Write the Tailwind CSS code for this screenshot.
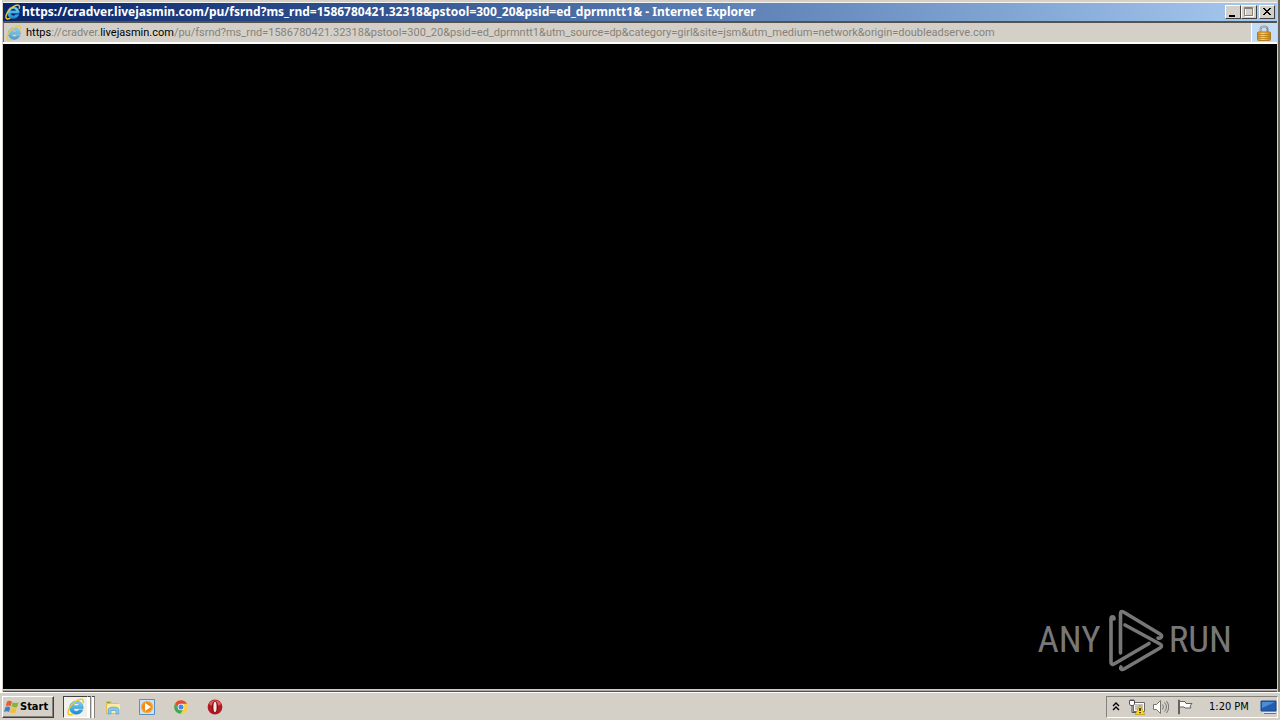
<!DOCTYPE html>
<html lang="en">
<head>
<meta charset="utf-8">
<title>Internet Explorer</title>
<script src="https://cdn.jsdelivr.net/npm/@tailwindcss/browser@4"></script>
</head>
<body class="flex h-screen flex-col overflow-hidden bg-[#d4d0c8] font-['Tahoma','DejaVu_Sans_Condensed','DejaVu_Sans',sans-serif] text-[11px] text-black">
<svg class="absolute size-0" aria-hidden="true">
  <defs>
    <linearGradient id="blue" x1="0" y1="0" x2="0" y2="1"><stop offset="0" stop-color="#7edcff"/><stop offset="1" stop-color="#168bd2"/></linearGradient>
    <linearGradient id="gold" x1="0" y1="0" x2="1" y2="0"><stop offset="0" stop-color="#d88f16"/><stop offset=".4" stop-color="#ffd45a"/><stop offset="1" stop-color="#c98212"/></linearGradient>
    <symbol id="ie" viewBox="0 0 16 16">
      <path d="M14.4 9.3H5.6c.4 2.7 3.8 3.4 5 1.2h3.5C12 16.5 2.3 15.6 2.3 8.7 2.3.8 14.8.4 14.4 9.3ZM5.7 6.8h5.2C10.5 4 6.2 4 5.7 6.8Z" fill="url(#blue)" stroke="#2587c5" stroke-width=".4"/>
      <path d="M14.2 4.7C15.6.3 11.9.2 8 2.8 3 6 .2 11.3 1.1 14c.5 1.5 2.8 1 4.3 0" fill="none" stroke="#efc530" stroke-width="1.4"/>
    </symbol>
  </defs>
</svg>

<main class="flex min-h-0 flex-1 flex-col border-l-2 border-r-2 border-l-white border-r-[#68655f] pt-[3px]">
  <header class="ml-px mr-px flex h-[18px] shrink-0 items-center bg-linear-to-r from-[#0a246a] to-[#a6caf0] pl-[2px] pr-[2px] shadow-[0_-1px_0_#f4f2ed]">
    <svg class="size-4 shrink-0" aria-hidden="true"><use href="#ie"/></svg>
    <h1 class="ml-px min-w-0 flex-1 truncate font-['Noto_Sans',sans-serif] text-[12px] font-bold leading-[18px] text-white">https://cradver.livejasmin.com/pu/fsrnd?ms_rnd=1586780421.32318&amp;pstool=300_20&amp;psid=ed_dprmntt1&amp; - Internet Explorer</h1>
    <div class="flex">
      <button aria-label="Minimize" class="flex h-[14px] w-4 items-center justify-center border border-b-[#404040] border-l-white border-r-[#404040] border-t-white bg-[#d4d0c8]"><svg class="h-3 w-[14px] shrink-0" viewBox="0 0 14 12"><path d="M3 9h6v2H3z"/></svg></button>
      <button aria-label="Maximize" disabled class="flex h-[14px] w-4 items-center justify-center border border-b-[#404040] border-l-white border-r-[#404040] border-t-white bg-[#d4d0c8]"><svg class="h-3 w-[14px] shrink-0" viewBox="0 0 14 12" fill="none"><path d="M3.5 2.5h8v8h-8z" stroke="#fff"/><path d="M2.5 1.5h8v8h-8zM2.5 2.5h8" stroke="#85827c"/></svg></button>
      <button aria-label="Close" class="ml-[2px] flex h-[14px] w-4 items-center justify-center border border-b-[#404040] border-l-white border-r-[#404040] border-t-white bg-[#d4d0c8]"><svg class="h-3 w-[14px] shrink-0" viewBox="0 0 14 12"><path d="m3 2 7 7m0-7-7 7M4 2l7 7m0-7-7 7" stroke="#000"/></svg></button>
    </div>
  </header>
  <div class="ml-px mr-px flex h-[23px] shrink-0 border-b-2 border-t-2 border-b-white border-t-[#55534f] bg-[#d4d0c8]">
    <div class="flex min-w-0 flex-1 items-center border-l border-l-[#77746e] pl-[2px] pt-px">
      <svg class="size-4 shrink-0 opacity-75" aria-hidden="true"><use href="#ie"/></svg>
      <p class="ml-1 truncate font-['Roboto',sans-serif] leading-[18px] text-[#85827c]"><span class="text-black">https</span>://cradver.<span class="text-black">livejasmin.com</span>/pu/fsrnd?ms_rnd=1586780421.32318&amp;pstool=300_20&amp;psid=ed_dprmntt1&amp;utm_source=dp&amp;category=girl&amp;site=jsm&amp;utm_medium=network&amp;origin=doubleadserve.com</p>
    </div>
    <button aria-label="Security report" class="flex w-[26px] items-center justify-center border-l border-l-white bg-[#c3dcf7] pr-px">
      <svg class="size-4" viewBox="0 0 16 16"><path d="M4.5 8V4.5C4.5.5 11.5.5 11.5 4.5V8" fill="none" stroke="#918b7d" stroke-width="2"/><path d="M4 7V4.5C4 1 10 1 11 3" fill="none" stroke="#e5e2d6" stroke-width=".7"/><rect x="1.5" y="7" width="13" height="8.5" rx="1" fill="url(#gold)" stroke="#b57917"/><path d="M2 9.5h12M2 11.5h12M2 13.5h12" stroke="#ad741b" stroke-width=".7"/></svg>
    </button>
  </div>
  <section class="ml-px mr-px flex min-h-0 flex-1 items-end justify-end bg-black pb-[17px] pr-[45px]">
    <div class="flex items-center font-['Roboto_Condensed','Liberation_Sans_Narrow',sans-serif] text-[37px] leading-[62px] text-[#777777]">
      <span>ANY</span>
      <svg class="mx-1 ml-[6px] h-[64px] w-[58px]" viewBox="0 0 58 64" fill="none" stroke="#777777" stroke-width="3.6" stroke-linecap="round" stroke-linejoin="round"><path d="M7 11C7 8 4 8 4 11v43c0 2 1 3 3 2l35-20.5"/><path d="M13.5 45V6c0-3 1-3 3-2L53 26c3 2 1 5-2 4"/><path d="M18 17l35 19c2 1 2 3 0 4L17 61c-2 1-4 0-3-2"/></svg>
      <span>RUN</span>
    </div>
  </section>
  <div class="ml-px mr-px h-[3px] shrink-0 border-b border-t border-b-[#55534f] border-t-[#d4d0c8] bg-[#aaa69f]"></div>
</main>

<footer class="flex h-[28px] shrink-0 items-center border-t border-t-white pl-[2px] pr-[2px]">
  <button class="flex h-[22px] w-[52px] items-center border border-b-[#404040] border-l-white border-r-[#404040] border-t-white pl-px pt-px font-bold shadow-[inset_-1px_-1px_0_#85827c]">
    <svg class="size-4 shrink-0" viewBox="0 0 16 16"><path d="M3 2.5c2-1 3.4-.8 5 .2L6.6 7.2c-1.7-1-3-1-4.9 0Z" fill="#f05a25"/><path d="M8.8 3.2c2 1 3.6.8 5.8 0l-1.4 4.7c-2 .8-3.7.6-5.7-.3Z" fill="#81b83b"/><path d="M1.4 8.2c1.8-1 3.3-.8 5 .2L5 13c-2-1.2-3.2-1-5 0Z" fill="#3d80c4"/><path d="M7.2 8.8c1.8 1 3.5.9 5.7.2l-1.5 4.6c-2 .8-3.8.6-5.6-.3Z" fill="#f6bd2e"/></svg>
    <span>Start</span>
  </button>
  <nav aria-label="Taskbar" class="flex h-full flex-1 items-center pl-[9px]">
    <button aria-label="Internet Explorer" class="flex h-[22px] w-[25px] items-center justify-center border border-b-white border-l-[#404040] border-r-white border-t-[#404040] bg-[#f2f0eb]"><svg class="size-[18px]"><use href="#ie"/></svg></button>
    <span class="flex h-[22px] w-[7px] gap-px"><i class="w-[3px] border-r border-t border-r-[#85827c] border-t-[#404040] bg-white"></i><i class="w-[3px] border-r border-t border-r-[#85827c] border-t-[#404040] bg-white"></i></span>
    <button aria-label="File Explorer" class="ml-[9px] flex size-[18px] items-center justify-center"><svg class="size-4" viewBox="0 0 16 16"><path d="M1 2h5l1 2h7v11H1Z" fill="#e8bd51"/><path d="M2 3h3v1H2z" fill="#58a953"/><path d="M3 5h12v9H2V6Z" fill="#ffeaa1"/><path d="M3 15v-4c0-2 2-3 5.5-3s5.5 1 5.5 3v4h-3v-3.5H6V15Z" fill="#83c9ed" stroke="#539bc4" stroke-width=".6"/></svg></button>
    <button aria-label="Media Player" class="ml-4 flex size-[18px] items-center justify-center"><svg class="size-4" viewBox="0 0 16 16"><path d="M.5.5h15v15H.5Z" fill="#c9e2f8" stroke="#5690c7"/><circle cx="8" cy="8" r="6" fill="#f28b14"/><circle cx="8" cy="8" r="5.4" fill="none" stroke="#ffbd52" stroke-width=".7"/><path d="m6 4 6 4-6 4Z" fill="#fff"/></svg></button>
    <button aria-label="Chrome" class="ml-4 flex size-[18px] items-center justify-center"><svg class="size-[14px]" viewBox="0 0 14 14"><circle cx="7" cy="7" r="6.8" fill="#fbd03e"/><path d="M1.1 3.6A6.8 6.8 0 0 1 13 3.8H7L4.2 8.6Z" fill="#e34a3c"/><path d="M1.1 3.6 4.2 8.6 8.8 9.8 6.6 13.8A6.8 6.8 0 0 1 1.1 3.6Z" fill="#41a85b"/><circle cx="7" cy="7" r="3.3" fill="#f5f5f5"/><circle cx="7" cy="7" r="2.5" fill="#4786e9"/></svg></button>
    <button aria-label="Opera" class="ml-4 flex size-[18px] items-center justify-center"><svg class="size-4" viewBox="0 0 16 16"><circle cx="8" cy="8" r="7.4" fill="#b31920"/><path d="M2 5C4 0 12 0 14 5c-3 3-9 3-12 0Z" fill="#df5b5e"/><ellipse cx="8" cy="8" rx="3.2" ry="6" fill="#8c0c12"/><ellipse cx="8" cy="8" rx="1.6" ry="5.2" fill="#eeeae6"/></svg></button>
  </nav>
  <aside class="flex h-[22px] w-[172px] items-center border border-b-white border-l-[#85827c] border-r-white border-t-[#85827c] pl-1">
    <button aria-label="Show hidden icons" class="size-[10px]"><svg class="size-[10px]" viewBox="0 0 10 10" fill="none" stroke="#000" stroke-width="1.4"><path d="M2 4 5 1l3 3M2 8l3-3 3 3"/></svg></button>
    <button aria-label="Network warning" class="ml-2 size-4"><svg class="size-4" viewBox="0 0 16 16"><path d="M4.5 3.5h11v9h-11z" fill="#fff" stroke="#6a6a6a"/><path d="M6 5h8v6H6z" fill="#c4c2be"/><path d="M.5 1.5h5V5l-1 1.5h-3L.5 5Z" fill="#fff" stroke="#555"/><path d="M2 0v2M4 0v2M3 7v6.5h5" fill="none" stroke="#555"/><path d="m11 6 4.8 9.5H6.2Z" fill="#ffd927" stroke="#b89207" stroke-width=".7"/><path d="M11 9v3M11 13v1.3" stroke="#000" stroke-width="1.3"/></svg></button>
    <button aria-label="Volume" class="ml-2 size-4"><svg class="size-4" viewBox="0 0 16 16" fill="none" stroke="#77746e"><path d="M.5 5.5h3l4-4v13l-4-4h-3Z" fill="#fff"/><path d="M9.5 5.5q2 2.5 0 5M11.5 3.5q4 4.5 0 9M13.5 2q4.5 6 0 12"/></svg></button>
    <button aria-label="Action Center" class="ml-2 size-4"><svg class="size-4" viewBox="0 0 16 16" fill="#fff" stroke="#66635e"><path d="M1.5 1v14h1V1Z"/><path d="M2.5 2.5H8l1 2h6l-2 2.5 1 2H8L7 8H2.5Z"/></svg></button>
    <time class="ml-4 leading-4">1:20 PM</time>
    <button aria-label="Show desktop" class="ml-auto h-4 w-[17px]"><svg class="h-4 w-[17px]" viewBox="0 0 17 16"><path d="M1 2h15v10H1Z" fill="#245dab" stroke="#174a8c"/><path d="M2 3h13L2 9Z" fill="#4d8cd7"/><path d="M3 13.5h13" stroke="#ddeaff"/><path d="M4 14.5h12" stroke="#5678a2"/></svg></button>
  </aside>
</footer>
</body>
</html>
